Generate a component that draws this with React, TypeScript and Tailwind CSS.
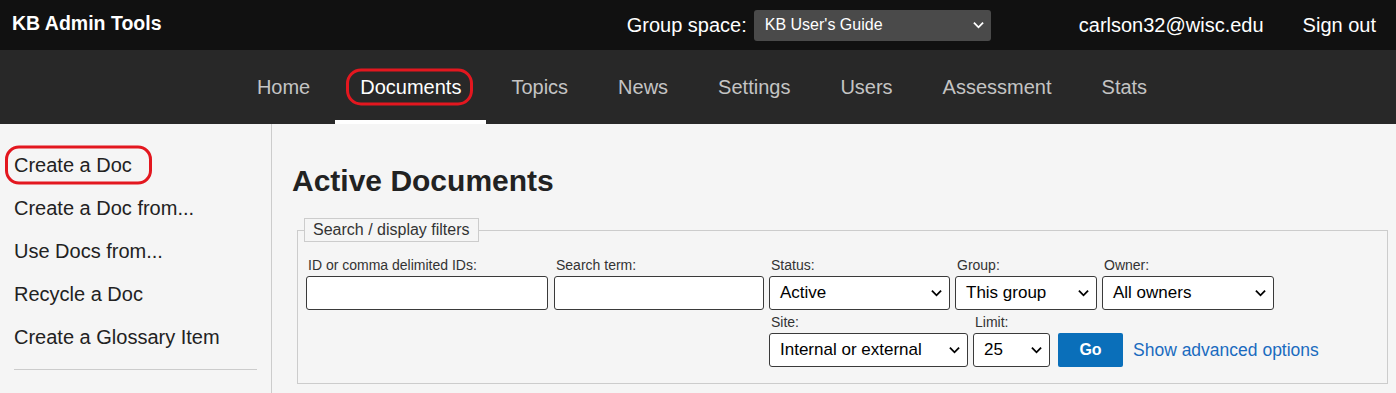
import React from 'react';

// --- Data ---
const navItems = ['Home', 'Documents', 'Topics', 'News', 'Settings', 'Users', 'Assessment', 'Stats'];
const sideLinks = ['Create a Doc', 'Create a Doc from...', 'Use Docs from...', 'Recycle a Doc', 'Create a Glossary Item'];

const font = { fontFamily: '"Liberation Sans", Arial, sans-serif' };

// --- Sub-Components ---
const Chevron: React.FC<{ className?: string }> = ({ className = '' }) => (
  <svg viewBox="0 0 12 8" className={`w-[11px] h-[8px] ${className}`} fill="none" stroke="currentColor" strokeWidth="2">
    <path d="M1 1.5 L6 6.5 L11 1.5" />
  </svg>
);

const FakeSelect: React.FC<{ value: string; className?: string }> = ({ value, className = '' }) => (
  <div
    className={`flex items-center justify-between h-[34px] pl-[10px] pr-[7px] bg-white border border-[#3a3a3a] rounded-[3px] text-[17px] text-black ${className}`}
  >
    <span className="whitespace-nowrap">{value}</span>
    <Chevron className="text-black" />
  </div>
);

const Field: React.FC<{ label: string; children: React.ReactNode }> = ({ label, children }) => (
  <div className="flex flex-col">
    <label className="text-[14px] leading-[17px] text-[#333] pl-[2px] mb-[2px] whitespace-nowrap">{label}</label>
    {children}
  </div>
);

const App: React.FC = () => {
  return (
    <div className="w-full min-h-screen bg-[#f5f5f5] text-[#222]" style={font}>
      {/* --- Top bar --- */}
      <div className="h-[50px] bg-[#111111] flex items-center pl-3 pr-5 text-white">
        <div className="font-bold text-[19.5px] flex-1 -mt-[2px]">KB Admin Tools</div>
        <div className="flex items-center">
          <span className="text-[20px] mr-[7px]">Group space:</span>
          <div className="w-[237px] h-[31px] bg-[#4a4a4a] rounded-[3px] flex items-center justify-between pl-[11px] pr-[7px] text-[16px]">
            <span>KB User's Guide</span>
            <Chevron className="text-white" />
          </div>
        </div>
        <span className="text-[20px] ml-[88px]">carlson32@wisc.edu</span>
        <span className="text-[20px] ml-[39px]">Sign out</span>
      </div>

      {/* --- Nav --- */}
      <nav className="h-[74px] bg-[#282828] flex justify-center pl-2">
        {navItems.map((item) => {
          const active = item === 'Documents';
          return (
            <div
              key={item}
              className={`h-full flex items-center px-[25px] pt-1 border-b-4 text-[20px] ${
                active ? 'border-white text-white' : 'border-transparent text-[#c4c4c4]'
              }`}
            >
              <span className="relative">
                {item}
                {active && (
                  <span className="absolute -left-[14px] -right-[12px] top-1/2 -translate-y-1/2 h-[37px] border-[3px] border-[#e3171f] rounded-[15px]"></span>
                )}
              </span>
            </div>
          );
        })}
      </nav>

      {/* --- Body --- */}
      <div className="flex">
        {/* Sidebar */}
        <aside className="w-[272px] shrink-0 border-r border-[#cccccc] pt-[20px] pb-6">
          <ul className="px-[14px]">
            {sideLinks.map((link, idx) => (
              <li key={link} className="text-[20px] leading-[43px] text-[#222]">
                <span className="relative">
                  {link}
                  {idx === 0 && (
                    <span className="absolute -left-[9px] -right-[20px] top-1/2 -translate-y-1/2 h-[39px] border-[3px] border-[#e3171f] rounded-[14px]"></span>
                  )}
                </span>
              </li>
            ))}
          </ul>
          <div className="mx-[14px] mt-[10px] border-t border-[#cccccc]"></div>
        </aside>

        {/* Main */}
        <main className="flex-1 pl-5 pr-2 pt-[39px]">
          <h1 className="text-[30px] leading-[36px] font-bold text-[#222]">Active Documents</h1>

          <fieldset className="mt-[19px] ml-[5px] border border-[#cccccc] px-2 pb-[16px]">
            <legend className="border border-[#cccccc] px-2 -ml-[2px] text-[16px] leading-[22px] text-[#333]">
              Search / display filters
            </legend>

            <div className="flex gap-[5px] pt-[15px]">
              <div className="mr-[1px]">
                <Field label="ID or comma delimited IDs:">
                  <input className="w-[242px] h-[34px] bg-white border border-[#3a3a3a] rounded-[3px]" />
                </Field>
              </div>
              <div>
                <Field label="Search term:">
                  <input className="w-[210px] h-[34px] bg-white border border-[#3a3a3a] rounded-[3px]" />
                </Field>
              </div>

              <div className="flex flex-col gap-[4px]">
                <div className="flex gap-[5px]">
                  <Field label="Status:">
                    <FakeSelect value="Active" className="w-[181px]" />
                  </Field>
                  <Field label="Group:">
                    <FakeSelect value="This group" className="w-[142px]" />
                  </Field>
                  <Field label="Owner:">
                    <FakeSelect value="All owners" className="w-[172px]" />
                  </Field>
                </div>
                <div className="flex items-end">
                  <Field label="Site:">
                    <FakeSelect value="Internal or external" className="w-[199px]" />
                  </Field>
                  <div className="ml-[5px]">
                    <Field label="Limit:">
                      <FakeSelect value="25" className="w-[77px]" />
                    </Field>
                  </div>
                  <button className="ml-[8px] w-[65px] h-[34px] bg-[#0a6fba] rounded-[2px] text-white font-bold text-[16px]">
                    Go
                  </button>
                  <a className="ml-[10px] mb-[4px] text-[17.5px] text-[#1a6bbf] whitespace-nowrap">Show advanced options</a>
                </div>
              </div>
            </div>
          </fieldset>
        </main>
      </div>
    </div>
  );
};

export default App;
